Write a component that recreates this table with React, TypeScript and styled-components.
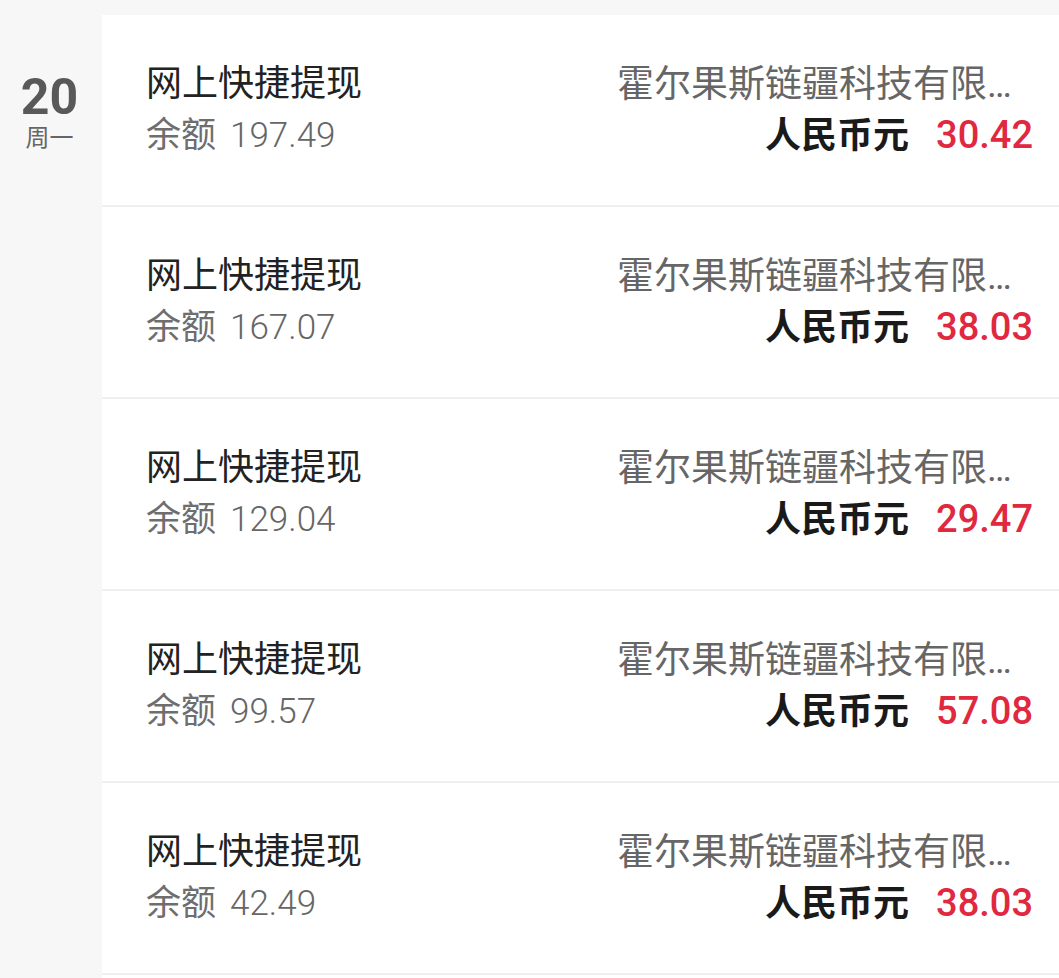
import styled, { createGlobalStyle } from 'styled-components'

const GlobalStyle = createGlobalStyle`
    html, body {
        margin: 0;
        padding: 0;
        background: #f7f7f7;
        font-family: Roboto, "Noto Sans CJK SC", sans-serif;
    }
`

const Page = styled.div`
    padding-top: 15px;
    height: 963px;
    overflow: hidden;
`

const DayGroup = styled.div`
    display: flex;
    align-items: flex-start;
`

const DayCol = styled.div`
    width: 102px;
    flex-shrink: 0;
    display: flex;
    flex-direction: column;
    align-items: center;
    padding-top: 53px;
`

const DayNum = styled.div`
    font-size: 50px;
    font-weight: 700;
    line-height: 58px;
    color: #595959;
    margin-left: -3px;
`

const Weekday = styled.div`
    font-size: 24px;
    line-height: 28px;
    color: #666;
    margin-top: -2px;
    margin-left: -3px;
`

const List = styled.div`
    flex: 1;
    background: #fff;
`

const Row = styled.div`
    height: 190px;
    display: flex;
    align-items: center;
    justify-content: space-between;
    padding: 0 26px 0 44px;
    border-bottom: 2px solid #efefef;
`

const Left = styled.div`
    display: flex;
    flex-direction: column;
`

const Title = styled.div`
    font-size: 36px;
    line-height: 51px;
    color: #222;
`

const Balance = styled.div`
    font-size: 35px;
    line-height: 51px;
    color: #6e6e6e;

    span {
        margin-left: 14px;
        font-weight: 300;
        color: #666;
    }
`

const Right = styled.div`
    width: 416px;
    display: flex;
    flex-direction: column;
    align-items: flex-end;
`

const Company = styled.div`
    width: 100%;
    font-size: 37px;
    line-height: 51px;
    color: #666;
    white-space: nowrap;
    overflow: hidden;
    text-overflow: ellipsis;
`

const AmountLine = styled.div`
    display: flex;
    align-items: baseline;
    gap: 27px;
    line-height: 51px;
`

const Currency = styled.span`
    font-size: 36px;
    font-weight: 700;
    color: #1a1a1a;
`

const Amount = styled.span`
    font-size: 38px;
    font-weight: 500;
    color: #e0283f;
`

const rows = [
    { balance: '197.49', amount: '30.42' },
    { balance: '167.07', amount: '38.03' },
    { balance: '129.04', amount: '29.47' },
    { balance: '99.57', amount: '57.08' },
    { balance: '42.49', amount: '38.03' },
    { balance: '4.46', amount: '38.03' },
]

function App() {
    return (
        <Page>
            <GlobalStyle />
            <DayGroup>
                <DayCol>
                    <DayNum>20</DayNum>
                    <Weekday>周一</Weekday>
                </DayCol>
                <List>
                    {rows.map((r, i) => (
                        <Row key={i}>
                            <Left>
                                <Title>网上快捷提现</Title>
                                <Balance>
                                    余额<span>{r.balance}</span>
                                </Balance>
                            </Left>
                            <Right>
                                <Company>霍尔果斯链疆科技有限公司</Company>
                                <AmountLine>
                                    <Currency>人民币元</Currency>
                                    <Amount>{r.amount}</Amount>
                                </AmountLine>
                            </Right>
                        </Row>
                    ))}
                </List>
            </DayGroup>
        </Page>
    )
}

export default App
